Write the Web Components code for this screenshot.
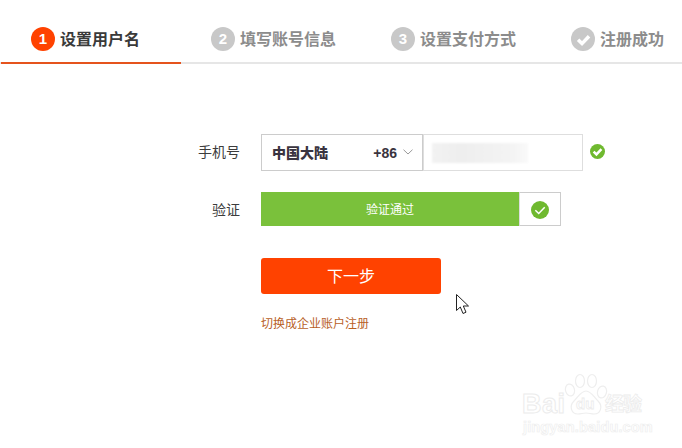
<!DOCTYPE html>
<html lang="zh"><head><meta charset="utf-8">
<style>
html,body{margin:0;padding:0;background:#fff}
body{width:682px;height:448px;overflow:hidden;position:relative;font-family:"Liberation Sans","Noto Sans CJK SC",sans-serif}
</style></head><body>
<step-bar>
  <step-tab state="active" mark="1">设置用户名</step-tab>
  <step-tab mark="2">填写账号信息</step-tab>
  <step-tab mark="3">设置支付方式</step-tab>
  <step-tab mark="check">注册成功</step-tab>
</step-bar>
<reg-form></reg-form>
<mouse-cursor></mouse-cursor>
<baidu-mark></baidu-mark>
<script>
const def=(name,html,init)=>customElements.define(name,class extends HTMLElement{
  connectedCallback(){ if(this.shadowRoot) return; const r=this.attachShadow({mode:'open'}); r.innerHTML=html; init&&init(this,r);} });
const CK='<svg viewBox="0 0 24 24" width="100%" height="100%"><path d="M5.800 12.300l4.500 4.400 8-8.400" fill="none" stroke="#fff" stroke-width="SW"/></svg>';

def('step-bar',`<style>:host{display:flex;height:62px;padding-left:1px;border-bottom:2px solid #e6e6e6}</style><slot></slot>`);

def('step-tab',`<style>
:host{display:flex;flex:none;box-sizing:border-box;width:180px;height:64px;padding:27px 0 0 30px;gap:5px;align-items:flex-start;color:#8c8c8c;font:bold 16px/24px "Liberation Sans","Noto Sans CJK SC",sans-serif}
:host(:last-child){width:141px}
:host([state=active]){color:#3a3a3a;border-bottom:2px solid #e5531d}
.m{width:24px;height:24px;border-radius:50%;background:#c8c8c8;color:#fff;display:flex;align-items:center;justify-content:center;font:bold 15px/24px "Liberation Sans",sans-serif;flex:none}
:host([state=active]) .m{background:#ff4200}
.t{white-space:nowrap;padding-top:1px}
</style><span class="m"></span><span class="t"><slot></slot></span>`,(h,r)=>{
  const m=r.querySelector('.m'),v=h.getAttribute('mark');
  if(v==='check') m.innerHTML=CK.replace('SW','4').replace('100%','21').replace('100%','21'); else m.textContent=v;
});

def('reg-form',`<style>
:host{display:grid;grid-template-columns:240px auto;column-gap:21px;row-gap:21px;padding-top:70px;justify-content:start;font:14px/20px "Liberation Sans","Noto Sans CJK SC",sans-serif;color:#3c3c3c}
.l{display:flex;align-items:center;justify-content:flex-end}
.l.up{padding-bottom:2px}
.l.down{padding-top:2px}
.row{display:flex;align-items:center}
.sel{box-sizing:border-box;width:162px;height:37px;border:1px solid #ccc;display:flex;align-items:center;padding:1px 9px 0 10px;font-weight:bold;color:#3a3440}
.sel b{flex:1;font-size:14px}.sel i{font-style:normal;font-size:14px;margin-right:6px}
.sel svg{margin-top:-2px}
.in{box-sizing:border-box;width:160px;height:37px;border:1px solid #dedede;padding:8px 0 0 8px;overflow:hidden}
.blur{width:96px;height:20px;background:linear-gradient(90deg,#f2f2f2,#eeeeee 30%,#f4f4f4 85%,#fafafa);filter:blur(1px)}
.ok{width:15px;height:15px;border-radius:50%;background:#6fb92f;margin:-3px 0 0 7px}
.slide{display:flex;height:34px}
.fill{box-sizing:border-box;width:258px;background:#7ac13b;color:#fff;font-size:12px;line-height:36px;text-align:center}
.tick{box-sizing:border-box;width:42px;border:1px solid #ccc;border-left:1px solid #ddd;display:flex;align-items:center;justify-content:center;padding-top:2px}
.tick span{width:18px;height:18px;border-radius:50%;background:#6fb92f;margin-left:-1px}
.btn{grid-column:2;margin-top:11px;width:180px;height:36px;box-sizing:border-box;border-radius:3px;background:#ff4200;color:#fff;font:16px/38px "Liberation Sans","Noto Sans CJK SC",sans-serif;text-align:center}
.link{grid-column:2;margin-top:0;font-size:12px;line-height:18px;color:#b8601f}
svg{display:block}
</style>
<div class="l up">手机号</div>
<div class="row"><div class="sel"><b>中国大陆</b><i>+86</i><svg width="10" height="6" viewBox="0 0 10 6"><path d="M.5.7L5 5l4.500-4.300" fill="none" stroke="#999"/></svg></div><div class="in"><div class="blur"></div></div><span class="ok" id="a"></span></div>
<div class="l down">验证</div>
<div class="slide"><div class="fill">验证通过</div><div class="tick"><span id="b"></span></div></div>
<div class="btn">下一步</div>
<div class="link">切换成企业账户注册</div>`,(h,r)=>{
  r.getElementById('a').innerHTML=CK.replace('SW','4');
  r.getElementById('b').innerHTML=CK.replace('SW','2');
});

def('mouse-cursor',`<style>:host{position:absolute;left:456px;top:294px;width:14px;height:21px}</style>
<svg width="14" height="21" viewBox="0 0 14 21"><path d="M.5.5v16l3.800-3.500 2.700 6.500 3-1.300-2.700-6.200h5.200z" fill="#fff" stroke="#222" stroke-width="1"/></svg>`);

def('baidu-mark',`<style>
:host{position:absolute;left:520px;top:372px;width:140px;height:66px;pointer-events:none}
.b{position:absolute;left:2px;top:17px;font:bold 27px/30px "Liberation Sans",sans-serif;color:#fff;-webkit-text-stroke:1px #ececec;letter-spacing:.5px}
.j{position:absolute;left:3px;top:47px;font:bold 14.500px/16px "Liberation Sans",sans-serif;color:#fff;-webkit-text-stroke:.7px #eeeeee;white-space:nowrap;letter-spacing:.15px}
.z{position:absolute;left:85px;top:19px;font:bold 19px/24px "Noto Sans CJK SC",sans-serif;color:#fff;-webkit-text-stroke:.8px #ececec;white-space:nowrap;letter-spacing:-1px}
svg{position:absolute;left:44px;top:1px}
.d{position:absolute;left:56px;top:23px;font:bold 15px/18px "Liberation Sans",sans-serif;color:#fff;-webkit-text-stroke:.8px #ececec}
</style>
<div class="b">Bai</div>
<svg width="44" height="46" viewBox="0 0 44 46" fill="#fff" stroke="#eeeeee" stroke-width="1.200">
<ellipse cx="6" cy="17" rx="4.500" ry="6" transform="rotate(-15 6 17)"/><ellipse cx="16" cy="8" rx="4.500" ry="6.500"/><ellipse cx="28" cy="8" rx="4.500" ry="6.500"/><ellipse cx="38" cy="19" rx="4.500" ry="6" transform="rotate(15 38 19)"/>
<path d="M22 18c5 0 8 6 12 10 5 5 3 13-4 13-3 0-5-1-8-1s-5 1-8 1c-7 0-9-8-4-13 4-4 7-10 12-10z"/></svg>
<div class="d">du</div><div class="z">经验</div><div class="j">jingyan.baidu.com</div>`);
</script>
</body></html>
